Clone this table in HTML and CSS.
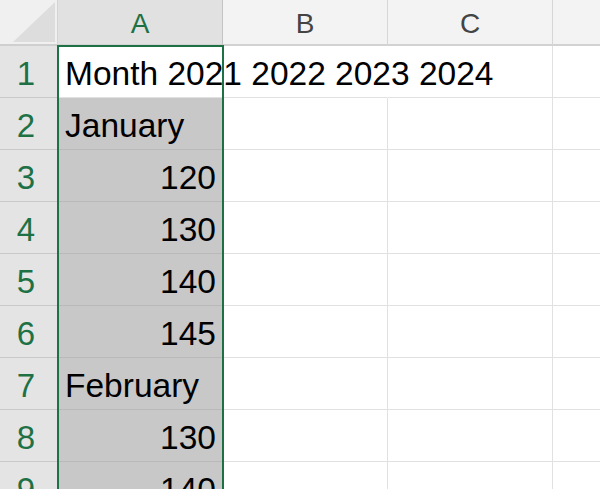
FILE: index.html
```html
<!DOCTYPE html>
<html>
<head>
<meta charset="utf-8">
<link rel="stylesheet" href="styles.css">
</head>
<body>
<div class="sheet">
  <div class="grid">
    <div class="corner"><span class="tri"></span></div>
    <div class="colhead sel">A</div>
    <div class="colhead">B</div>
    <div class="colhead">C</div>
    <div class="colhead last"></div>

    <div class="rowhead">1</div>
    <div class="cell active"><span class="spill">Month 2021 2022 2023 2024</span></div>
    <div class="cell nob"></div>
    <div class="cell"></div>
    <div class="cell last"></div>

    <div class="rowhead">2</div>
    <div class="cell s">January</div>
    <div class="cell"></div>
    <div class="cell"></div>
    <div class="cell last"></div>

    <div class="rowhead">3</div>
    <div class="cell s num">120</div>
    <div class="cell"></div>
    <div class="cell"></div>
    <div class="cell last"></div>

    <div class="rowhead">4</div>
    <div class="cell s num">130</div>
    <div class="cell"></div>
    <div class="cell"></div>
    <div class="cell last"></div>

    <div class="rowhead">5</div>
    <div class="cell s num">140</div>
    <div class="cell"></div>
    <div class="cell"></div>
    <div class="cell last"></div>

    <div class="rowhead">6</div>
    <div class="cell s num">145</div>
    <div class="cell"></div>
    <div class="cell"></div>
    <div class="cell last"></div>

    <div class="rowhead">7</div>
    <div class="cell s">February</div>
    <div class="cell"></div>
    <div class="cell"></div>
    <div class="cell last"></div>

    <div class="rowhead">8</div>
    <div class="cell s num">130</div>
    <div class="cell"></div>
    <div class="cell"></div>
    <div class="cell last"></div>

    <div class="rowhead">9</div>
    <div class="cell s num">140</div>
    <div class="cell"></div>
    <div class="cell"></div>
    <div class="cell last"></div>
  </div>
  <div class="selection"></div>
</div>
</body>
</html>
```

FILE: styles.css
```css
html, body {
  margin: 0;
  padding: 0;
  background: #ffffff;
}

.sheet {
  position: relative;
  width: 600px;
  height: 489px;
  overflow: hidden;
  font-family: "Liberation Sans", Arial, sans-serif;
}

.grid {
  display: grid;
  grid-template-columns: 58px 165px 165px 165px 1fr;
  grid-template-rows: 46px repeat(9, 52px);
}

.corner {
  position: relative;
  background: #f0f0f0;
  border-right: 1px solid #d4d4d4;
  border-bottom: 2px solid #cfcfcf;
  box-sizing: border-box;
}

.corner .tri {
  position: absolute;
  left: 13px;
  top: 2px;
  width: 42px;
  height: 40px;
  background: #dddddd;
  clip-path: polygon(100% 0, 100% 100%, 0 100%);
}

.colhead {
  background: #f3f3f3;
  color: #444444;
  font-size: 28px;
  line-height: 48px;
  text-align: center;
  border-right: 1px solid #d6d6d6;
  border-bottom: 2px solid #d2d2d2;
  box-sizing: border-box;
  overflow: hidden;
}

.colhead.sel {
  background: #e1e1e1;
  color: #1e7145;
  border-right-color: #c4c4c4;
}

.colhead.last {
  border-right: none;
}

.rowhead {
  background: #e4e4e4;
  color: #1e7145;
  font-size: 33px;
  line-height: 55px;
  text-align: center;
  padding-right: 5px;
  border-right: 1px solid #cfcfcf;
  border-bottom: 1px solid #c9c9c9;
  box-sizing: border-box;
  overflow: hidden;
}

.cell {
  font-size: 33.5px;
  line-height: 55px;
  color: #000000;
  padding: 0 6px 0 7px;
  white-space: nowrap;
  border-right: 1px solid #e1e1e1;
  border-bottom: 1px solid #e1e1e1;
  box-sizing: border-box;
  overflow: visible;
}

.cell.s {
  background: #c8c8c8;
  border-bottom-color: #b9b9b9;
  overflow: hidden;
}

.cell.num {
  text-align: right;
}

.cell.active {
  background: #ffffff;
  position: relative;
  z-index: 1;
}

.cell.nob {
  border-right-color: transparent;
}

.cell.last {
  border-right: none;
}

.spill {
  display: inline-block;
  line-height: 55px;
  height: 51px;
}

.selection {
  position: absolute;
  left: 57px;
  top: 45px;
  width: 167px;
  height: 460px;
  border: 2px solid #1e7145;
  box-sizing: border-box;
  z-index: 2;
  pointer-events: none;
}
```
